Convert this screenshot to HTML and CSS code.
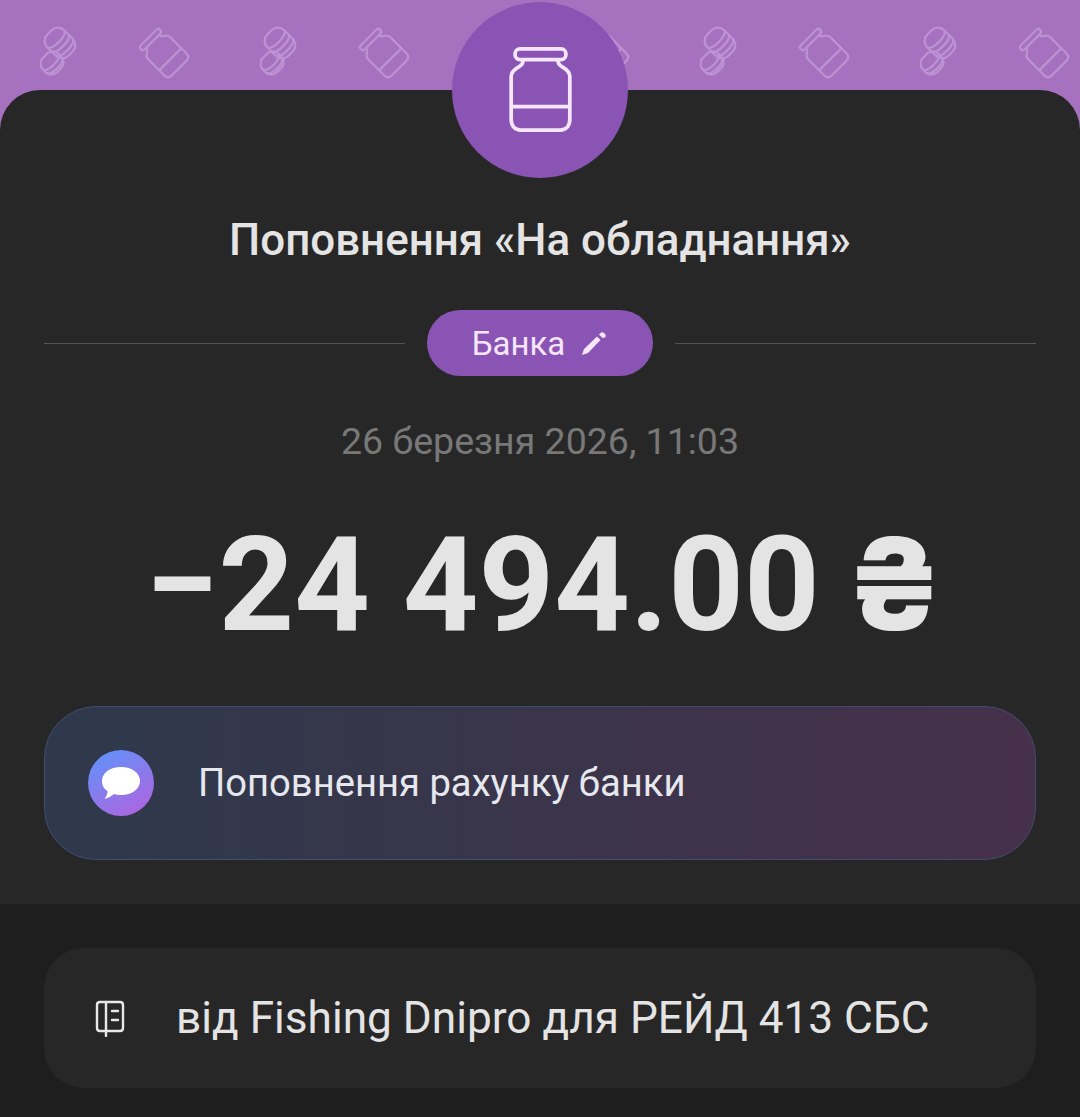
FILE: index.html
```html
<!DOCTYPE html>
<html lang="uk">
<head>
    <meta charset="UTF-8">
    <meta name="viewport" content="width=device-width, initial-scale=1.0">
    <title>Поповнення банки</title>
    <link rel="stylesheet" href="styles.css">
</head>
<body>

    <svg width="0" height="0" class="defs">
        <symbol id="coins" viewBox="0 0 40 52">
            <g fill="none" stroke="currentColor" stroke-width="2.3">
                <g transform="rotate(-45 20 17)">
                    <rect x="8" y="2" width="24" height="30" rx="9"/>
                    <path d="M8 11 C8 17 32 17 32 11 M8 17 C8 23 32 23 32 17 M8 23 C8 29 32 29 32 23"/>
                </g>
                <g transform="rotate(-45 12 37)">
                    <rect x="1" y="27" width="22" height="20" rx="8"/>
                    <path d="M1 35 C1 41 23 41 23 35 M1 40 C1 46 23 46 23 40"/>
                </g>
            </g>
        </symbol>
        <symbol id="jar" viewBox="0 0 64 88">
            <g fill="none" stroke="currentColor" stroke-linejoin="round">
                <rect x="6" y="2" width="52" height="11" rx="5"/>
                <path d="M14 13 V15 C14 21 2 21 2 30 V74 C2 81 6 85 12 85 H52 C58 85 62 81 62 74 V30 C62 21 50 21 50 15 V13"/>
                <path d="M2 61 H62"/>
            </g>
        </symbol>
    </svg>

    <header class="banner">
        <svg class="banner-pattern" width="1080" height="90" viewBox="0 0 1080 90">
            <use href="#coins" x="40" y="26" width="40" height="52"/>
            <use href="#jar" transform="rotate(-45 164 53)" x="147" y="30" width="34" height="46"/>
            <use href="#coins" x="260" y="26" width="40" height="52"/>
            <use href="#jar" transform="rotate(-45 384 53)" x="367" y="30" width="34" height="46"/>
            <use href="#jar" transform="rotate(-45 604 53)" x="587" y="30" width="34" height="46"/>
            <use href="#coins" x="700" y="26" width="40" height="52"/>
            <use href="#jar" transform="rotate(-45 824 53)" x="807" y="30" width="34" height="46"/>
            <use href="#coins" x="920" y="26" width="40" height="52"/>
            <use href="#jar" transform="rotate(-45 1044 53)" x="1027" y="30" width="34" height="46"/>
        </svg>
    </header>

    <main class="sheet">
        <div class="avatar">
            <svg class="avatar-jar" width="63" height="86">
                <use href="#jar" width="63" height="86"/>
            </svg>
        </div>

        <h1 class="title">Поповнення «На обладнання»</h1>

        <div class="category">
            <span class="rule"></span>
            <span class="badge">
                Банка
                <svg width="26" height="26" viewBox="0 0 26 26" fill="#f6e6fb">
                    <path d="M1 25 L3 19 L16 6.500 L19.500 10 L7 23 Z"/>
                    <path d="M18 4.500 L19.500 3 C20.500 2 22 2 23 3 L24 4 C25 5 25 6.500 24 7.500 L21.500 8 Z"/>
                </svg>
            </span>
            <span class="rule"></span>
        </div>

        <p class="date">26 березня 2026, 11:03</p>
        <p class="amount">−24 494.00 <span class="currency">₴</span></p>

        <div class="message">
            <span class="message-icon">
                <svg width="40" height="34" viewBox="0 0 40 34">
                    <path fill="#fff" d="M20 1 C31 1 39 7 39 15 C39 23 31 29 20 29 C17.5 29 15.5 28.7 13 28 C10.5 30 7.5 32 3.500 33 C5 31 6.500 28 6.500 25 C2.500 22.500 1 19 1 15 C1 7 9 1 20 1 Z"/>
                </svg>
            </span>
            <span>Поповнення рахунку банки</span>
        </div>
    </main>

    <section class="details">
        <div class="note">
            <svg width="32" height="38" viewBox="0 0 32 38" fill="none" stroke="#e8e8e8" stroke-width="2.400" stroke-linecap="round" stroke-linejoin="round">
                <path d="M6 3 H26 C28 3 29 4 29 6 V29 C29 31 28 32 26 32 H6 C4 32 3 31 3 29 V6 C3 4 4 3 6 3 Z"/>
                <path d="M12 3 V37"/>
                <path d="M18 12 H24 M18 21 H24"/>
            </svg>
            <span>від Fishing Dnipro для РЕЙД 413 СБС</span>
        </div>
    </section>

</body>
</html>
```

FILE: styles.css
```css
* {
    box-sizing: border-box;
}

body {
    margin: 0;
    font-family: 'Roboto', sans-serif;
    background-color: #1e1e1e;
    color: #e4e4e4;
}

.defs {
    display: block;
    height: 0;
}

.banner {
    height: 130px;
    margin-bottom: -40px;
    background-color: #a672bf;
}

.banner-pattern {
    display: block;
    color: #bd92d3;
    stroke-width: 4.3;
}

.sheet {
    position: relative;
    height: 814px;
    padding: 0 44px;
    background-color: #272727;
    border-radius: 40px 40px 0 0;
}

.avatar {
    position: absolute;
    top: -88px;
    left: 452px;
    width: 176px;
    height: 176px;
    display: flex;
    align-items: center;
    justify-content: center;
    background-color: #8a54b5;
    border-radius: 50%;
}

.avatar-jar {
    color: #f6e6fb;
    stroke-width: 3.8;
}

.title {
    margin: 0;
    padding-top: 122px;
    font-size: 43.9px;
    line-height: 56px;
    font-weight: 500;
    text-align: center;
}

.category {
    display: flex;
    align-items: center;
    gap: 22px;
    margin-top: 42px;
}

.rule {
    flex: 1;
    height: 1px;
    background-color: #555;
}

.badge {
    display: flex;
    align-items: center;
    gap: 16px;
    height: 66px;
    padding: 0 46px 0 45px;
    font-size: 33px;
    color: #f6e6fb;
    background-color: #8a54b5;
    border-radius: 33px;
}

.date {
    margin: 42px 0 0;
    font-size: 37.5px;
    line-height: 46px;
    color: #787878;
    text-align: center;
}

.amount {
    margin: 40px 0 0;
    padding-left: 9px;
    font-size: 132px;
    line-height: 160px;
    font-weight: 700;
    text-align: center;
    white-space: nowrap;
}

.currency {
    margin-left: -8px;
    font-family: 'Inter', sans-serif;
    font-size: 127px;
    font-weight: 800;
}

.message {
    display: flex;
    align-items: center;
    gap: 44px;
    height: 154px;
    margin-top: 41px;
    padding-left: 43px;
    font-size: 38.2px;
    color: #e6e8ee;
    background: linear-gradient(90deg, #2e394b, #46304a);
    border: 1.5px solid #3f4d70;
    border-radius: 52px;
}

.message-icon {
    display: flex;
    align-items: center;
    justify-content: center;
    width: 66px;
    height: 66px;
    background: linear-gradient(150deg, #5a96fb, #b660dd);
    border-radius: 50%;
}

.details {
    height: 213px;
    padding: 44px 44px 0;
}

.note {
    display: flex;
    align-items: center;
    gap: 50px;
    height: 140px;
    padding-left: 50px;
    font-size: 44.2px;
    background-color: #272727;
    border-radius: 40px;
}
```
